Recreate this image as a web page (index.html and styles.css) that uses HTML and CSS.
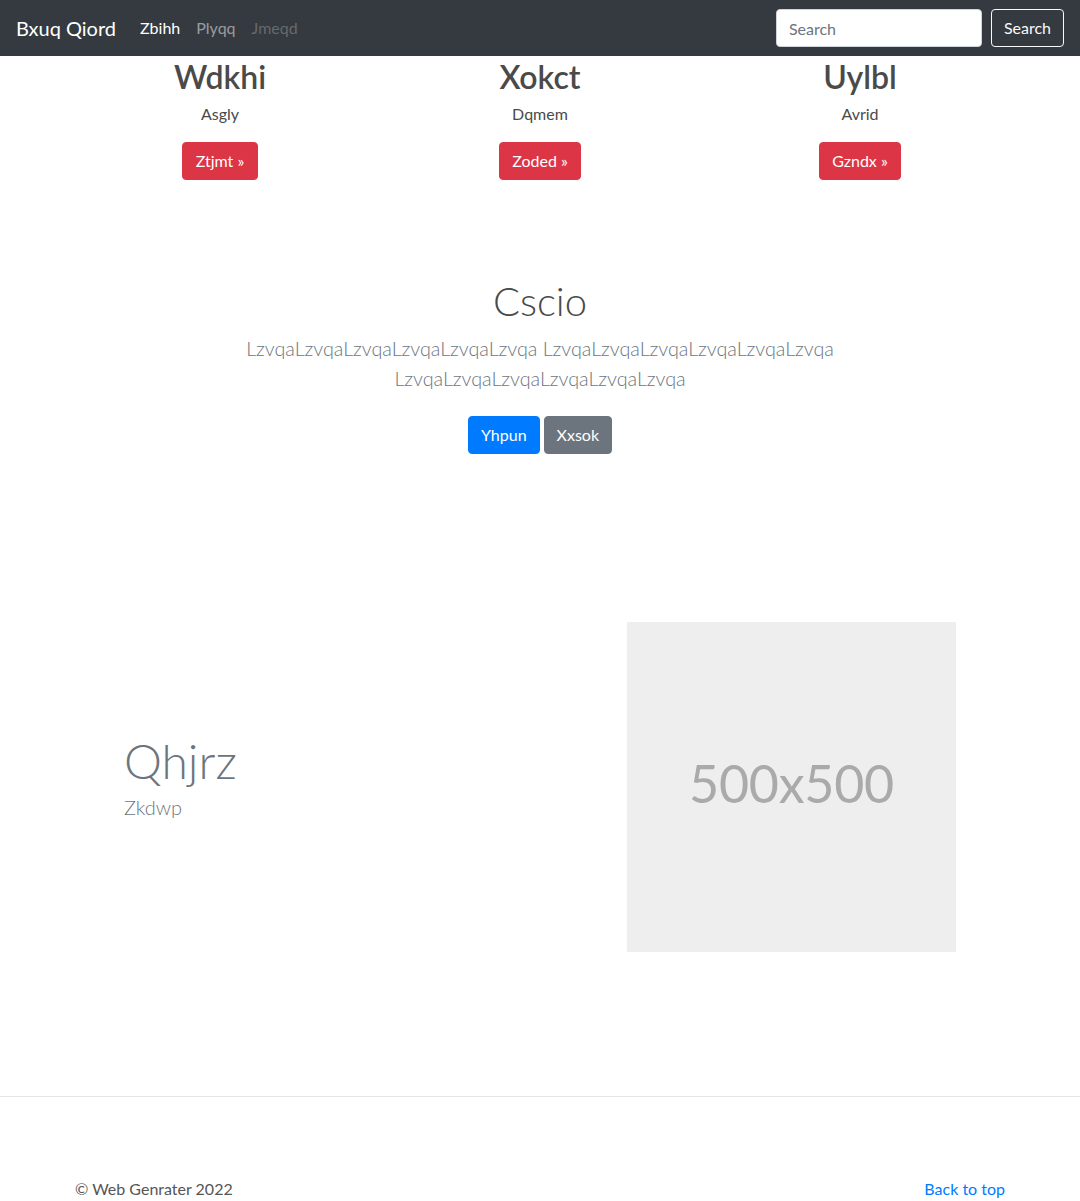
FILE: index.html
```html
<!DOCTYPE html>
<html lang="en">
<head>
<meta charset="utf-8">
<title>Bxuq Qiord</title>
<link rel="stylesheet" href="styles.css">
</head>
<body>
<nav class="navbar">
  <a class="brand" href="#">Bxuq Qiord</a>
  <ul class="nav">
    <li><a class="nav-link active" href="#">Zbihh</a></li>
    <li><a class="nav-link" href="#">Plyqq</a></li>
    <li><a class="nav-link disabled" href="#">Jmeqd</a></li>
  </ul>
  <form class="search">
    <input class="search-input" type="text" placeholder="Search">
    <button class="btn btn-outline-light" type="button">Search</button>
  </form>
</nav>

<main>
  <div class="container">
    <div class="cols">
      <div class="col">
        <h2 class="col-title">Wdkhi</h2>
        <p class="col-text">Asgly</p>
        <p class="col-action"><a class="btn btn-danger" href="#">Ztjmt &raquo;</a></p>
      </div>
      <div class="col">
        <h2 class="col-title">Xokct</h2>
        <p class="col-text">Dqmem</p>
        <p class="col-action"><a class="btn btn-danger" href="#">Zoded &raquo;</a></p>
      </div>
      <div class="col">
        <h2 class="col-title">Uylbl</h2>
        <p class="col-text">Avrid</p>
        <p class="col-action"><a class="btn btn-danger" href="#">Gzndx &raquo;</a></p>
      </div>
    </div>
  </div>

  <section class="jumbo">
    <div class="jumbo-inner">
      <h1 class="jumbo-title">Cscio</h1>
      <p class="lead">LzvqaLzvqaLzvqaLzvqaLzvqaLzvqa LzvqaLzvqaLzvqaLzvqaLzvqaLzvqa LzvqaLzvqaLzvqaLzvqaLzvqaLzvqa</p>
      <p class="jumbo-actions">
        <a class="btn btn-primary" href="#">Yhpun</a>
        <a class="btn btn-secondary" href="#">Xxsok</a>
      </p>
    </div>
  </section>

  <div class="container">
    <div class="feature">
      <div class="feature-text">
        <h2 class="feature-title">Qhjrz</h2>
        <p class="feature-sub">Zkdwp</p>
      </div>
      <div class="feature-media">
        <div class="placeholder">500x500</div>
      </div>
    </div>
  </div>
</main>

<footer class="footer">
  <div class="container footer-inner">
    <p class="copy">&copy; Web Genrater 2022</p>
    <p><a class="back" href="#">Back to top</a></p>
  </div>
</footer>
</body>
</html>
```

FILE: styles.css
```css
* { box-sizing: border-box; }

html, body {
  margin: 0;
  padding: 0;
}

body {
  font-family: "Lato", "Open Sans", sans-serif;
  font-size: 16px;
  line-height: 1.5;
  color: #212529;
  background: #fff;
}

a { text-decoration: none; }
p { margin: 0; }
h1, h2 { margin: 0; }

/* Navbar */
.navbar {
  display: flex;
  align-items: center;
  height: 56px;
  padding: 8px 16px;
  background: #343a40;
}

.brand {
  font-size: 20px;
  line-height: 30px;
  color: #fff;
  margin-right: 16px;
  padding: 5px 0;
}

.nav {
  display: flex;
  list-style: none;
  margin: 0;
  padding: 0;
  flex: 1;
}

.nav-link {
  display: block;
  padding: 8px;
  color: rgba(255, 255, 255, 0.5);
}

.nav-link.active { color: #fff; }
.nav-link.disabled { color: rgba(255, 255, 255, 0.25); }

.search {
  display: flex;
  align-items: center;
}

.search-input {
  width: 206px;
  height: 38px;
  padding: 6px 12px;
  font-family: inherit;
  font-size: 16px;
  color: #495057;
  background: #fff;
  border: 1px solid #ced4da;
  border-radius: 4px;
  margin-right: 9px;
}

.search-input::placeholder { color: #6c757d; }

/* Buttons */
.btn {
  display: inline-block;
  font-family: inherit;
  font-size: 16px;
  line-height: 24px;
  padding: 6px 12px;
  border: 1px solid transparent;
  border-radius: 4px;
  color: #fff;
  text-align: center;
  cursor: pointer;
}

.btn-outline-light {
  background: transparent;
  border-color: #f8f9fa;
  color: #f8f9fa;
}

.btn-danger { background: #dc3545; border-color: #dc3545; padding: 6px 12.5px; }
.btn-primary { background: #007bff; border-color: #007bff; }
.btn-secondary { background: #6c757d; border-color: #6c757d; }

/* Layout */
.container {
  width: 960px;
  margin: 0 auto;
  padding: 0 15px;
}

.cols {
  display: grid;
  grid-template-columns: repeat(3, 1fr);
  margin: 0 -15px;
}

.col {
  text-align: center;
  padding: 0 15px;
}

.col-title {
  font-size: 32px;
  font-weight: 600;
  line-height: 38px;
  color: #4a4a4a;
  padding-top: 2px;
  margin-bottom: 6px;
}

.col-text {
  color: #4a4a4a;
  margin-bottom: 16px;
}

.col-action { margin-bottom: 16px; }

/* Jumbotron */
.jumbo {
  padding: 81px 0 48px;
  text-align: center;
}

.jumbo-inner {
  width: 640px;
  margin: 0 auto;
  padding: 0 15px;
}

.jumbo-title {
  font-size: 40px;
  font-weight: 300;
  line-height: 48px;
  color: #4a4a4a;
  margin-bottom: 8px;
}

.lead {
  font-size: 19.8px;
  font-weight: 300;
  line-height: 30px;
  color: #6c757d;
  margin-bottom: 15px;
  letter-spacing: -0.05px;
}

.jumbo-actions {
  display: flex;
  justify-content: center;
  gap: 4px;
}

.jumbo-actions .btn { margin: 8px 0; }

/* Feature */
.feature {
  display: flex;
  margin: 112px -15px 0;
}

.feature-text {
  width: 480px;
  padding: 110px 15px 0 64px;
}

.feature-title {
  font-size: 48px;
  font-weight: 300;
  line-height: 57.6px;
  color: #6c757d;
}

.feature-sub {
  font-size: 20px;
  font-weight: 300;
  line-height: 30px;
  margin-top: 2px;
  color: #6c757d;
}

.feature-media {
  width: 480px;
  padding-left: 87px;
}

.placeholder {
  width: 329px;
  height: 330px;
  padding-bottom: 8px;
  background: #eee;
  color: #aaa;
  font-size: 52px;
  letter-spacing: -0.3px;
  display: flex;
  align-items: center;
  justify-content: center;
}

/* Footer */
.footer {
  margin-top: 144px;
  border-top: 1px solid #e5e5e5;
  padding: 80px 0 48px;
}

.footer-inner {
  display: flex;
  justify-content: space-between;
}

.copy { color: #555; }
.back { color: #007bff; }
```
